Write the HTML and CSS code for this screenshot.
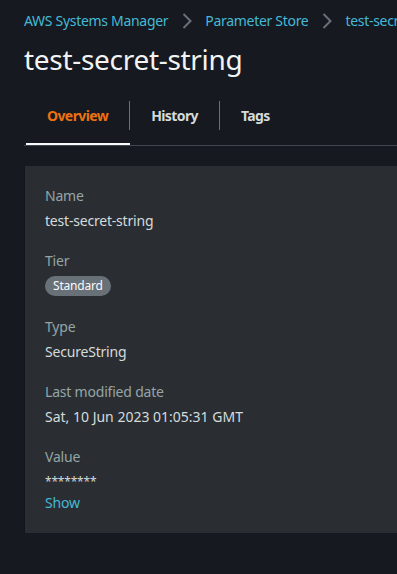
FILE: index.html
```html
<!DOCTYPE html>
<html lang="en">
<head>
  <meta charset="UTF-8">
  <title>test-secret-string</title>
  <link rel="stylesheet" href="styles.css">
</head>
<body>
  <nav class="breadcrumbs">
    <a href="#">AWS Systems Manager</a>
    <svg class="chevron" width="10" height="16" viewBox="0 0 10 16"><path d="M1.5 1l7 7-7 7" fill="none" stroke="currentColor" stroke-width="2"/></svg>
    <a href="#">Parameter Store</a>
    <svg class="chevron" width="10" height="16" viewBox="0 0 10 16"><path d="M1.5 1l7 7-7 7" fill="none" stroke="currentColor" stroke-width="2"/></svg>
    <a href="#">test-secret-string</a>
  </nav>

  <h1 class="title">test-secret-string</h1>

  <div class="tabs">
    <a href="#" class="tab active"><span>Overview</span></a>
    <a href="#" class="tab"><span>History</span></a>
    <a href="#" class="tab last"><span>Tags</span></a>
  </div>

  <div class="card">
    <div class="field">
      <div class="label">Name</div>
      <div class="value">test-secret-string</div>
    </div>
    <div class="field">
      <div class="label">Tier</div>
      <div class="value tier"><span class="badge">Standard</span></div>
    </div>
    <div class="field">
      <div class="label">Type</div>
      <div class="value">SecureString</div>
    </div>
    <div class="field">
      <div class="label">Last modified date</div>
      <div class="value date">Sat, 10 Jun 2023 01:05:31 GMT</div>
    </div>
    <div class="field">
      <div class="label">Value</div>
      <div class="value stars">********</div>
      <a href="#" class="link">Show</a>
    </div>
  </div>
</body>
</html>
```

FILE: styles.css
```css
body {
  margin: 0;
  padding: 0 0 0 24px;
  background: #16191f;
  color: #d5dbdb;
  font-family: "Noto Sans", "Open Sans", Arial, sans-serif;
  font-size: 14px;
  line-height: 22px;
  letter-spacing: -0.2px;
  overflow: hidden;
}
a {
  text-decoration: none;
}
.breadcrumbs {
  display: flex;
  align-items: center;
  white-space: nowrap;
  overflow: hidden;
  padding-top: 10px;
  height: 22px;
}
.breadcrumbs a {
  color: #44b9d6;
  letter-spacing: -0.3px;
}
.chevron {
  flex: none;
  color: #687078;
  margin: 0 13px 0 14px;
}
.title {
  margin: 9px 0 0;
  font-size: 28px;
  line-height: 36px;
  font-weight: 400;
  letter-spacing: -0.3px;
  color: #f2f3f3;
}
.tabs {
  display: flex;
  margin-top: 24px;
  border-bottom: 1px solid #414750;
}
.tab {
  display: block;
  padding-bottom: 15px;
  color: #d5dbdb;
  font-weight: 700;
  letter-spacing: -0.6px;
  position: relative;
}
.tab span {
  display: block;
  padding: 0 21px;
  border-right: 1px solid #687078;
  line-height: 29px;
}
.tab.last span {
  border-right: none;
}
.tab.active {
  color: #ec7211;
  margin-left: 2px;
}
.tab.active::after {
  content: "";
  position: absolute;
  left: 0;
  right: 0;
  bottom: 0;
  height: 2px;
  background: #fafafa;
}
.card {
  margin: 20px 0 0 1px;
  background: #2a2e33;
  padding: 19px 20px 19px;
  box-shadow: 0 1px 1px rgba(0, 0, 0, 0.5);
}
.field + .field {
  margin-top: 18px;
}
.label {
  color: #95a5a6;
  margin-bottom: 3px;
}
.value {
  color: #d5dbdb;
}
.date {
  letter-spacing: 0;
}
.tier {
  padding-top: 1px;
  line-height: 22px;
}
.badge {
  display: inline-block;
  background: #687078;
  color: #fafafa;
  font-size: 12px;
  line-height: 20px;
  padding: 0 8px;
  border-radius: 10px;
  vertical-align: top;
}
.stars {
  font-size: 12px;
  line-height: 21px;
}
.link {
  color: #44b9d6;
}
```
